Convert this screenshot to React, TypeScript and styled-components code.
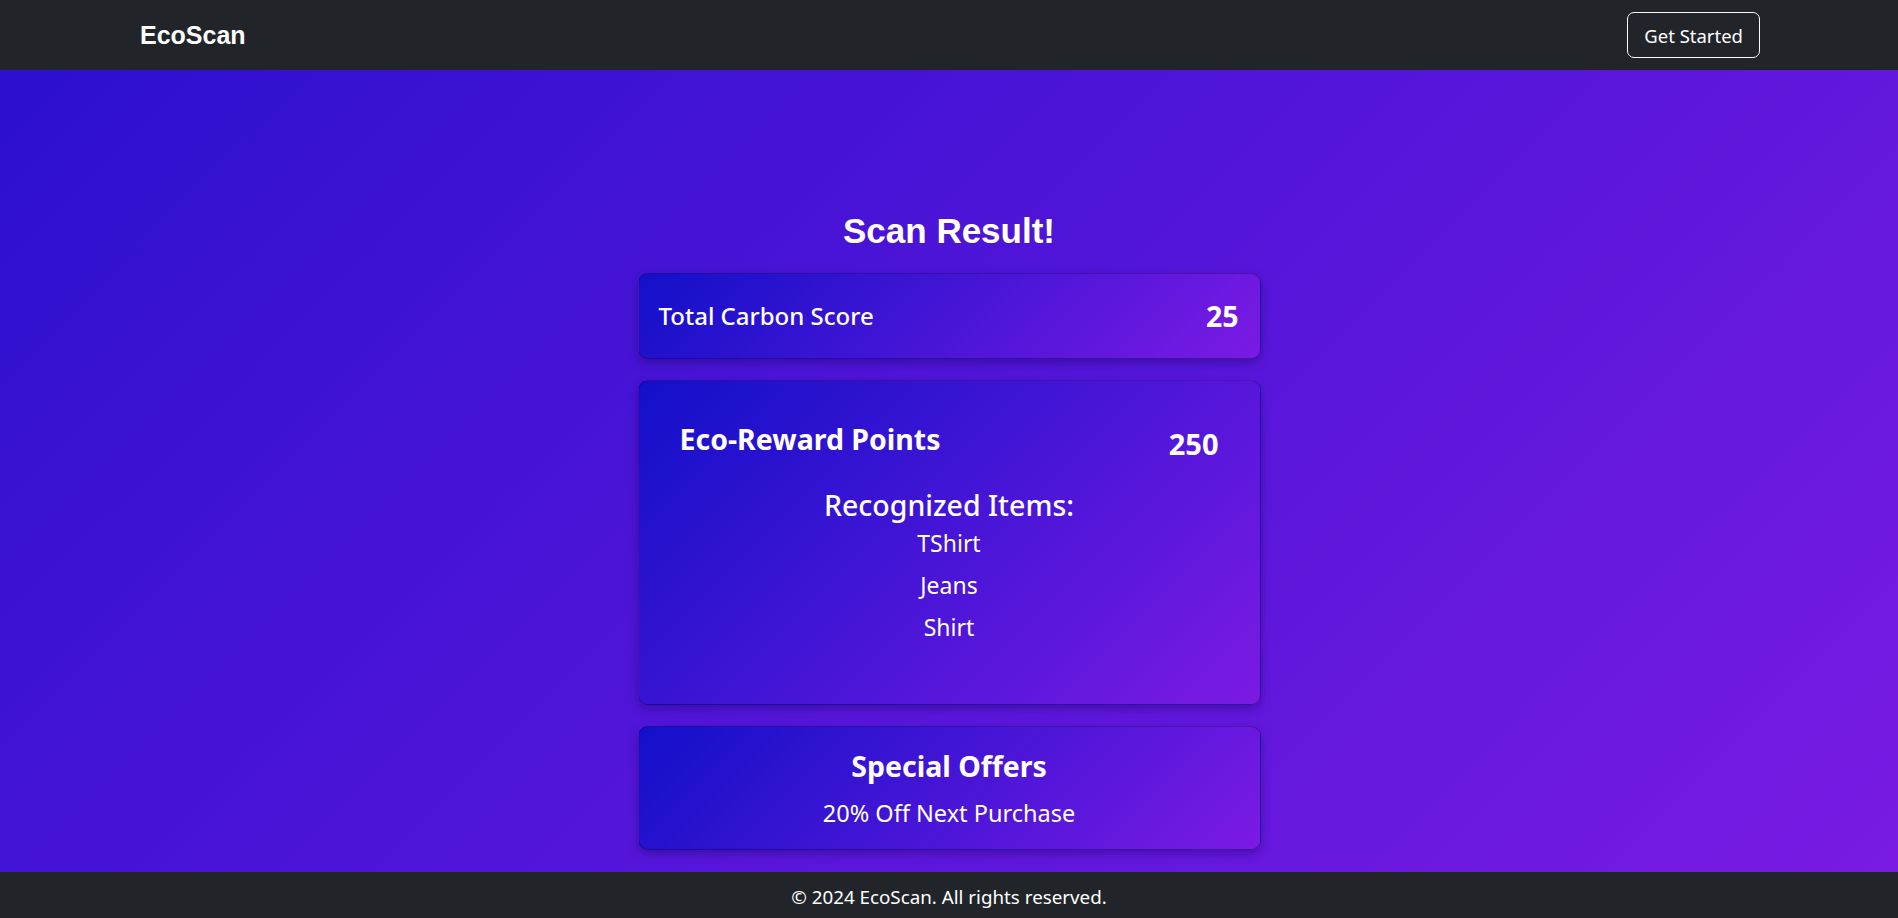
import React from "react";
import styled, { createGlobalStyle } from "styled-components";

const GlobalStyle = createGlobalStyle`
  * { box-sizing: border-box; }
  html, body { margin: 0; padding: 0; }
  body {
    font-family: "Noto Sans", "Open Sans", sans-serif;
    color: #ffffff;
    background: linear-gradient(135deg, #2a0fcf 0%, #7a1be3 100%);
    min-height: 100vh;
  }
  #root { min-height: 100vh; }
`;

const Page = styled.div`
  min-height: 100vh;
  display: flex;
  flex-direction: column;
`;

const NavBar = styled.nav`
  height: 70px;
  background: #212529;
  display: flex;
  align-items: center;
  justify-content: space-between;
  padding: 0 138px 0 140px;
`;

const Brand = styled.a`
  font-family: "Liberation Sans", Arial, sans-serif;
  font-weight: 700;
  font-size: 25px;
  line-height: 30px;
  color: #ffffff;
  text-decoration: none;
`;

const OutlineButton = styled.button`
  font-family: "Noto Sans", sans-serif;
  font-size: 18.5px;
  color: #ffffff;
  background: transparent;
  border: 1px solid #f8f9fa;
  border-radius: 7px;
  height: 46px;
  padding: 0 16px;
  display: inline-flex;
  align-items: center;
  cursor: pointer;
`;

const Main = styled.main`
  flex: 1;
  display: flex;
  flex-direction: column;
  align-items: center;
  padding: 140px 0 21px;
`;

const Column = styled.div`
  width: 623px;
  display: flex;
  flex-direction: column;
  gap: 21px;
`;

const Title = styled.h1`
  margin: 0;
  font-family: "Liberation Sans", Arial, sans-serif;
  font-weight: 700;
  font-size: 35px;
  line-height: 42px;
  text-align: center;
`;

const Card = styled.section<{ $pad: string; $height?: number }>`
  background: linear-gradient(135deg, #1210c9 0%, #7b1ae4 100%);
  border: 1px solid rgba(20, 0, 90, 0.35);
  border-radius: 10px;
  box-shadow: 0 4px 10px rgba(20, 0, 80, 0.35);
  padding: ${(p) => p.$pad};
  ${(p) => (p.$height ? `height: ${p.$height}px;` : "")}
`;

const ScoreRow = styled.div`
  display: flex;
  align-items: center;
  justify-content: space-between;
  height: 100%;
`;

const ScoreLabel = styled.span`
  font-size: 24px;
  font-weight: 500;
  line-height: 1.2;
`;

const ScoreValue = styled.span<{ $size: number; $offset?: number }>`
  font-weight: 700;
  font-size: ${(p) => p.$size}px;
  line-height: 1.2;
  margin-top: ${(p) => p.$offset ?? 0}px;
  margin-bottom: ${(p) => -(p.$offset ?? 0)}px;
`;

const HeaderRow = styled.div`
  display: flex;
  align-items: flex-start;
  justify-content: space-between;
`;

const CardHeading = styled.h3`
  margin: 0;
  font-weight: 700;
  font-size: 28.5px;
  line-height: 34.2px;
`;

const CenteredHeading = styled(CardHeading)`
  text-align: center;
`;

const SubHeading = styled.h4`
  margin: 31px 0 0;
  font-weight: 500;
  font-size: 28.5px;
  line-height: 34.4px;
  text-align: center;
`;

const ItemList = styled.ul`
  list-style: none;
  margin: 0;
  padding: 0;
  text-align: center;
`;

const Item = styled.li`
  font-size: 23px;
  line-height: 42px;
`;

const OfferText = styled.p`
  margin: 15.8px 0 0;
  font-size: 23.5px;
  line-height: 28.2px;
  text-align: center;
`;

const Footer = styled.footer`
  height: 46px;
  background: #212529;
  padding-top: 14.4px;
`;

const FooterText = styled.p`
  margin: 0;
  font-size: 18.8px;
  line-height: 22.6px;
  text-align: center;
`;

const items = ["TShirt", "Jeans", "Shirt"];

export default function App() {
  return (
    <>
      <GlobalStyle />
      <Page>
        <NavBar>
          <Brand href="#">EcoScan</Brand>
          <OutlineButton>Get Started</OutlineButton>
        </NavBar>
        <Main>
          <Column>
            <Title>Scan Result!</Title>
            <Card $pad="0 21px 0 20px" $height={86}>
              <ScoreRow>
                <ScoreLabel>Total Carbon Score</ScoreLabel>
                <ScoreValue $size={28.5}>25</ScoreValue>
              </ScoreRow>
            </Card>
            <Card $pad="41px 41px 55.8px">
              <HeaderRow>
                <CardHeading>Eco-Reward Points</CardHeading>
                <ScoreValue $size={29} $offset={4.5}>
                  250
                </ScoreValue>
              </HeaderRow>
              <SubHeading>Recognized Items:</SubHeading>
              <ItemList>
                {items.map((it) => (
                  <Item key={it}>{it}</Item>
                ))}
              </ItemList>
            </Card>
            <Card $pad="21.8px 20px 22px">
              <CenteredHeading>Special Offers</CenteredHeading>
              <OfferText>20% Off Next Purchase</OfferText>
            </Card>
          </Column>
        </Main>
        <Footer>
          <FooterText>© 2024 EcoScan. All rights reserved.</FooterText>
        </Footer>
      </Page>
    </>
  );
}
